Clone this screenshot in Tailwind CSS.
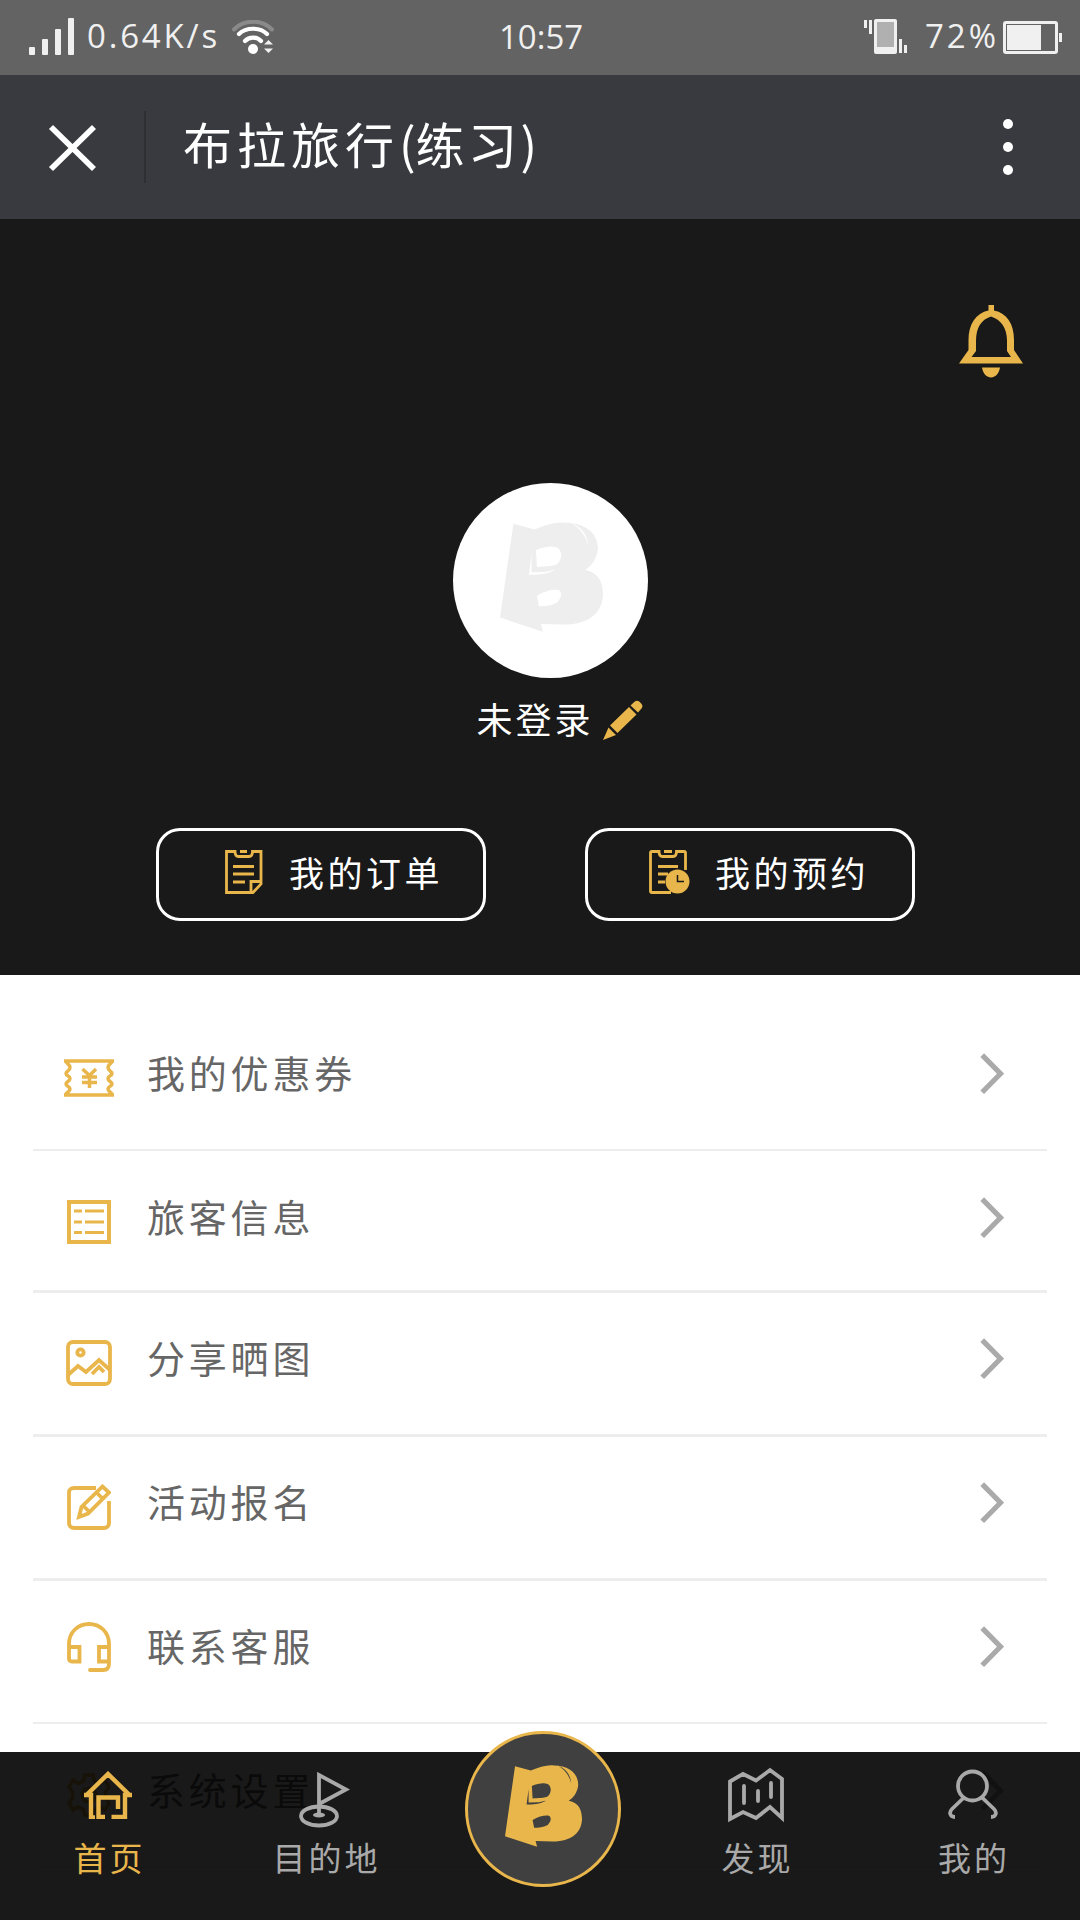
<!DOCTYPE html>
<html lang="zh-CN">
<head>
<meta charset="utf-8">
<title>布拉旅行(练习)</title>
<script src="https://cdn.jsdelivr.net/npm/@tailwindcss/browser@4"></script>
</head>
<body class="bg-white">
<svg class="hidden">
  <symbol id="brand" viewBox="210 188 307 328" preserveAspectRatio="none">
    <path fill="currentColor" fill-rule="evenodd" d="M250 193L313 210C345 197 378 187 405 190C465 190 502 222 502 268C499 298 482 320 464 331C505 338 517 370 517 405C515 455 480 494 400 494L332 492L338 515L210 473ZM317 272C340 262 365 258 380 264C398 275 395 300 380 314C365 321 340 320 320 322ZM320 408C345 393 370 388 385 391C397 398 393 415 380 428C362 438 345 439 326 439ZM304 285V338L345 337L375 330C350 345 320 346 296 346ZM422 190C452 203 472 226 474 262C466 228 448 207 422 190Z"/>
  </symbol>
  <symbol id="chevron" viewBox="0 0 24 42"><path d="M2.2 2.2L20.500 20.700L2.2 39.3" fill="none" stroke="currentColor" stroke-width="5.2"/></symbol>
</svg>
<div class="relative flex h-[1920px] w-[1080px] flex-col overflow-hidden bg-white font-['Noto_Sans_CJK_SC',sans-serif] font-normal">

  <!-- Status bar -->
  <div class="flex h-[75px] shrink-0 items-start bg-[#636363] pt-[18px] font-['Open_Sans','Noto_Sans_CJK_SC',sans-serif] text-[#f0f0f0]">
    <svg class="ml-[29px] h-[37px] w-[45px]" viewBox="0 0 45 37" fill="#f0f0f0"><rect y="29" width="6" height="8" rx="1"/><rect x="13" y="21" width="6" height="16" rx="1"/><rect x="26" y="11" width="6" height="26" rx="1"/><rect x="39" width="6" height="37" rx="1"/></svg>
    <span class="ml-[13px] w-[145px] text-[33px] leading-[35px] tracking-[2.800px]">0.64K/s</span>
    <svg class="mt-[2px] h-[35px] w-[42px]" viewBox="0 0 42 35" fill="none" stroke-linecap="round"><path d="M2 9.5C12-1 30-1 40 9.5" stroke="#8a8a8a" stroke-width="4"/><path d="M7 14C14 7 28 7 35 14M13 21C17 16.500 25 16.500 29 21" stroke="#fff" stroke-width="4.200"/><circle cx="21" cy="29" r="5" fill="#fff"/><path d="M32 24.500L36.500 20L41 24.500ZM32 28.500H41L36.500 33Z" fill="#f0f0f0"/></svg>
    <span class="ml-[225px] w-[90px] text-[33px] leading-[37px]">10:57</span>
    <svg class="ml-[275px] mt-px h-[35px] w-[43px]" viewBox="0 0 43 35" fill="#f0f0f0"><rect y="1" width="3" height="8"/><rect x="5" y="1" width="3" height="14"/><rect x="10" width="23" height="35" rx="2"/><rect x="13" y="3" width="17" height="25" fill="#b0b0b0"/><rect x="35" y="20" width="3" height="14"/><rect x="40" y="26" width="3" height="8"/></svg>
    <span class="ml-[18px] w-[78px] text-[33px] leading-[36px] tracking-[3px]">72%</span>
    <svg class="mt-[3px] h-[33px] w-[59px]" viewBox="0 0 59 33" fill="#f0f0f0"><rect x="1.500" y="1.500" width="52" height="30" rx="1.500" fill="none" stroke="#f0f0f0" stroke-width="3"/><rect x="4" y="4" width="34" height="25"/><rect x="56" y="12" width="3" height="9"/></svg>
  </div>

  <!-- Title bar -->
  <header class="flex h-36 shrink-0 items-center bg-[#393a3f] text-white">
    <svg class="ml-[48px] mt-[2px] h-12 w-12" viewBox="0 0 48 48"><path d="M3 3L46 45M46 3L3 45" stroke="#fff" stroke-width="5.800"/></svg>
    <div class="ml-[48px] h-[72px] w-[2px] bg-[#2e2f33]"></div>
    <h1 class="-mt-[9px] ml-[37px] text-[49px] font-normal leading-[60px] tracking-[5px]">布拉旅行<span class="tracking-[0px]">(</span><span class="tracking-[3.500px]">练习</span>)</h1>
    <div class="ml-auto mr-[67px] flex flex-col gap-[13px]"><i class="size-[10px] rounded-full bg-white"></i><i class="size-[10px] rounded-full bg-white"></i><i class="size-[10px] rounded-full bg-white"></i></div>
  </header>

  <!-- Profile -->
  <section class="flex h-[756px] shrink-0 flex-col items-center bg-[#191919] text-white">
    <svg class="mr-[57px] mt-[86px] h-[73px] w-16 self-end" viewBox="0 0 64 73"><path fill="#e9b64b" fill-rule="evenodd" d="M29.500 0H35V5.500C48 8 55 19 55 35V45L64 58.500H0L9.500 45V35C9.500 19 17 8 29.500 5.500ZM32 11.500C22 14.500 17 23 17 36V46L12.500 52H52L48 46V36C48 23 42 14.500 32 11.500ZM23 62.500H41C40 69 36 72.500 32 72.500C28 72.500 24 69 23 62.500Z"/></svg>
    <div class="ml-[21px] mt-[105px] flex size-[195px] justify-center rounded-full bg-white pl-[3px] pt-[39px] text-[#eee]"><svg class="h-[110px] w-[103px] -translate-x-[1px]"><use href="#brand"/></svg></div>
    <div class="ml-[39px] mt-[22px] flex h-[40px] items-center">
      <span class="-mt-[4px] w-[126px] text-[36px] leading-[40px] tracking-[3px]">未登录</span>
      <svg class="h-10 w-10" viewBox="0 0 40 40" fill="#e9b64b"><path d="M0 40L5.500 27.500L13 35ZM7 25.500L26 7L33.500 14.500L14.500 33ZM27.500 5.500L31.500 1.800C33 .3 35 .3 36.500 1.800L38.200 3.600C39.800 5.200 39.800 7 38.500 8.500L35 12.500Z"/></svg>
    </div>
    <div class="mt-[88px] flex w-full gap-[99px] pl-[156px] text-[35px] leading-[40px] tracking-[3.500px]">
      <div class="flex h-[93px] w-[330px] items-center rounded-[24px] border-[3px] border-white pl-[66px]">
        <svg class="-mt-[5px] h-11 w-[38px]" viewBox="0 0 38 44" fill="none" stroke="#e9b64b" stroke-width="2.800"><path d="M1.500 1.500H10C10 4 11 6.500 13.500 6.500H24C26.500 6.500 27.500 4 27.500 1.500H36V34L28 42.500H1.500ZM36 31.500H26V42.500M15 1.500H22M8 16.500H29M8 24H29M8 32H20"/></svg>
        <span class="-mt-[5px] ml-[26px]">我的订单</span>
      </div>
      <div class="flex h-[93px] w-[330px] items-center rounded-[24px] border-[3px] border-white pl-[61px]">
        <svg class="-mt-[5px] h-11 w-[42px]" viewBox="0 0 42 44" fill="none" stroke="#e9b64b" stroke-width="2.800"><path d="M22 42.500H3C2 42.500 1.500 42 1.500 41V3C1.500 2 2 1.500 3 1.500H10C10 4 11 6.500 13.500 6.500H24C26.500 6.500 27.500 4 27.500 1.500H35C36 1.500 36.500 2 36.500 3V20M15 1.500H23M9 16.500H29M9 24H19M9 32H16"/><circle cx="28.500" cy="31.500" r="12" fill="#e9b64b" stroke="none"/><path d="M28.500 25V31.500H35" stroke="#191919" stroke-width="1.500"/></svg>
        <span class="-mt-[5px] ml-[24px]">我的预约</span>
      </div>
    </div>
  </section>

  <!-- Menu -->
  <ul class="flex flex-col px-[33px] pt-[27px] text-[38px] leading-[50px] tracking-[3.800px] text-[#666]">
    <li class="flex h-[149px] items-center border-b-2 border-[#ededed] pb-[2px] pl-[25px]">
      <div class="flex w-[62px] justify-center"><svg class="mt-[7px] h-[38px] w-[50px]" viewBox="0 0 50 38" fill="none" stroke="#e9b64b" stroke-width="3.500"><path d="M0 2H50M0 36H50M2 2C2 5 6 5 6 8.500C6 12 2 12 2 14.500C2 17 6 16.500 6 19.500C6 22.500 2 22.500 2 25C2 27.500 6 27 6 30C6 33 2 33 2 36M48 2C48 5 44 5 44 8.500C44 12 48 12 48 14.500C48 17 44 16.500 44 19.500C44 22.500 48 22.500 48 25C48 27.500 44 27 44 30C44 33 48 33 48 36M18.500 10L25.500 16.500L32 10M25.500 16.500V29M18 18H33M18 23.500H33"/></svg></div>
      <span class="-mt-[5px] ml-[27px]">我的优惠券</span>
      <svg class="-mt-[2px] ml-auto mr-[43px] h-[42px] w-6 text-[#aaa]"><use href="#chevron"/></svg>
    </li>
    <li class="flex h-[142px] items-center border-b-[3px] border-[#ededed] pb-[5px] pl-[25px]">
      <div class="flex w-[62px] justify-center"><svg class="mt-[7px] h-11 w-11" viewBox="0 0 44 44" fill="none" stroke="#e9b64b" stroke-width="3.200"><path stroke-width="4" d="M2 2H42V42H2Z"/><path d="M7 11H15M18 11H37M7 22H15M18 22H37M7 32.500H15M18 32.500H37"/></svg></div>
      <span class="-mt-[4px] ml-[27px]">旅客信息</span>
      <svg class="ml-auto mr-[43px] h-[42px] w-6 text-[#aaa]"><use href="#chevron"/></svg>
    </li>
    <li class="flex h-[144px] items-center border-b-[3px] border-[#ededed] pb-[9px] pl-[25px]">
      <div class="flex w-[62px] justify-center"><svg class="mt-[8px] h-[46px] w-[46px]" viewBox="0 0 46 46" fill="none" stroke="#e9b64b" stroke-width="3.800"><rect x="2" y="2" width="42" height="42" rx="5"/><circle cx="14.500" cy="12.500" r="3.200"/><path d="M2 35L12 26L20 32L33 20L44 30M26 34L33 27L38 32"/></svg></div>
      <span class="-mt-[4px] ml-[27px]">分享晒图</span>
      <svg class="ml-auto mr-[43px] h-[42px] w-6 text-[#aaa]"><use href="#chevron"/></svg>
    </li>
    <li class="flex h-[144px] items-center border-b-[3px] border-[#ededed] pb-[9px] pl-[25px]">
      <div class="flex w-[62px] justify-center"><svg class="mt-[8px] h-[46px] w-[44px]" viewBox="0 0 44 46" fill="none" stroke="#e9b64b" stroke-width="3.800"><path d="M29 4H7C4 4 2 6 2 8V39C2 42 4 44 7 44H37C40 44 42 42 42 39V17M12 33L14.500 23L35.500 2.500L42 8.500L21 29.500ZM29.500 8.500L36 15M16 21.500L22.500 28"/></svg></div>
      <span class="-mt-[4px] ml-[27px]">活动报名</span>
      <svg class="ml-auto mr-[43px] h-[42px] w-6 text-[#aaa]"><use href="#chevron"/></svg>
    </li>
    <li class="flex h-[143px] items-center border-b-2 border-[#ededed] pb-[9px] pl-[25px]">
      <div class="flex w-[62px] justify-center"><svg class="h-[51px] w-[44px]" viewBox="0 0 44 51" fill="none" stroke="#e9b64b" stroke-width="3.800"><path d="M2 37V22C2 10 11 2 22 2S42 10 42 22V42C42 46 40 48 36 48H24M2 25H12.500V39.500H5C3 39.500 2 38.500 2 37M42 25H32V39.500H42" /><path d="M24 48H23" stroke-linecap="round"/></svg></div>
      <span class="-mt-[4px] ml-[27px]">联系客服</span>
      <svg class="ml-auto mr-[43px] h-[42px] w-6 text-[#aaa]"><use href="#chevron"/></svg>
    </li>
    <li class="flex h-[144px] items-center border-b-2 border-[#ededed] pb-[9px] pl-[25px]">
      <div class="flex w-[62px] justify-center"><svg class="mt-[8px] h-[44px] w-[44px]" viewBox="0 0 44 44" fill="none" stroke="#e9b64b" stroke-width="3.500"><path d="M18 2H26L27.500 8L33 10.500L38 7L42 14L38.500 19V25L42 30L38 37L33 34L27.500 36.500L26 42H18L16.500 36.500L11 34L6 37L2 30L5.500 25V19L2 14L6 7L11 10.500L16.500 8Z"/><circle cx="22" cy="22" r="7"/></svg></div>
      <span class="-mt-[4px] ml-[27px]">系统设置</span>
      <svg class="ml-auto mr-[43px] h-[42px] w-6 text-[#aaa]"><use href="#chevron"/></svg>
    </li>
  </ul>

  <!-- Tab bar, laid over the scrolling menu -->
  <nav class="absolute inset-x-0 bottom-0 grid h-[168px] grid-cols-5 bg-black/90 text-[33px] leading-[40px] tracking-[3px] text-[#a9a9a9]">
    <a class="flex flex-col items-center text-[#e9b64b]">
      <div class="flex h-[85px] pt-[19px]"><svg class="h-12 w-12" viewBox="0 0 48 48" fill="none" stroke="currentColor" stroke-width="4.400"><path d="M2 24.500L24 3L46 24.500M0 24H7V46.500H11M48 24H41V46H27.500M21 46H14.500V26.500H34V38"/></svg></div>
      <span class="pl-[3px]">首页</span>
    </a>
    <a class="flex flex-col items-center">
      <div class="flex h-[85px] pl-px pt-[20px]"><svg class="h-[56px] w-[52px]" viewBox="0 0 52 56" fill="none" stroke="currentColor" stroke-width="3.800"><path d="M20 43V3L47 17.500L20 32"/><ellipse cx="20" cy="44" rx="18" ry="9.500"/><ellipse cx="20" cy="43" rx="6" ry="2.500" fill="currentColor" stroke="none"/></svg></div>
      <span class="pl-[5px]">目的地</span>
    </a>
    <a class="flex flex-col items-center">
      <div class="-mt-[21px] ml-[6px] flex size-[156px] justify-center rounded-full border-[3px] border-[#e9b64b] bg-[#404040] pl-px pt-[31px] text-[#e9b64b]"><svg class="h-[82px] w-[77px]"><use href="#brand"/></svg></div>
    </a>
    <a class="flex flex-col items-center">
      <div class="flex h-[85px] pt-[15px]"><svg class="h-[56px] w-[56px]" viewBox="0 0 56 56" fill="none" stroke="currentColor" stroke-width="3.800"><path d="M2 14.500L15 7L28 13.500L42 3L54 12V51L42 40L28 51L15 45L2 52Z"/><path stroke-linecap="round" d="M16 19V36M30 24V34M43 16V30"/></svg></div>
      <span class="pl-[3px]">发现</span>
    </a>
    <a class="flex flex-col items-center">
      <div class="flex h-[85px] pl-[2px] pt-[17px]"><svg class="h-[50px] w-[50px]" viewBox="0 0 50 50" fill="none" stroke="currentColor" stroke-width="3.800"><circle cx="24.500" cy="17" r="14.500"/><path d="M16 28.500L4 40C1 43 1.500 48 7 48M34 28.500L46 40C49 43 48.500 48 43 48"/></svg></div>
      <span class="pl-[4px]">我的</span>
    </a>
  </nav>
</div>
</body>
</html>
